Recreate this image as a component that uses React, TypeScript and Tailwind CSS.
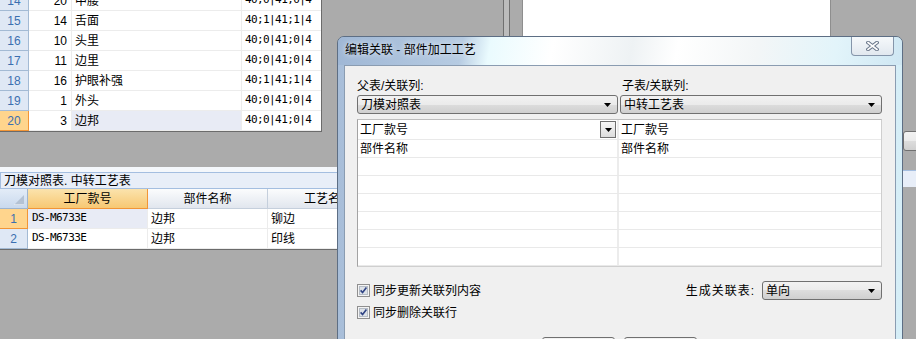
import React from "react";

const SANS = "font-['Liberation_Sans','Noto_Sans_CJK_SC',sans-serif]";
const MONO = "font-['DejaVu_Sans_Mono','Liberation_Mono',monospace]";

const TOP_ROWS = [
  { n: 14, q: 20, name: "中腰", code: "40;0|41;0|4" },
  { n: 15, q: 14, name: "舌面", code: "40;1|41;1|4" },
  { n: 16, q: 10, name: "头里", code: "40;0|41;0|4" },
  { n: 17, q: 11, name: "边里", code: "40;0|41;0|4" },
  { n: 18, q: 16, name: "护眼补强", code: "40;1|41;1|4" },
  { n: 19, q: 1, name: "外头", code: "40;0|41;0|4" },
  { n: 20, q: 3, name: "边邦", code: "40;0|41;0|4", active: true },
];

const BOTTOM_ROWS = [
  { n: 1, code: "DS-M6733E", part: "边邦", craft: "铆边", active: true },
  { n: 2, code: "DS-M6733E", part: "边邦", craft: "印线" },
];

const LINK_ROWS = [
  ["工厂款号", "工厂款号"],
  ["部件名称", "部件名称"],
  ["", ""],
  ["", ""],
  ["", ""],
  ["", ""],
  ["", ""],
  ["", ""],
];

function Arrow() {
  return (
    <svg width="7" height="4" viewBox="0 0 7 4">
      <path d="M0 0h7L3.5 4z" fill="#000" />
    </svg>
  );
}

function Combo({ value, className = "" }: { value: string; className?: string }) {
  return (
    <div
      className={`flex h-[19px] items-center justify-between rounded-[3px] border border-[#707070] bg-[linear-gradient(#f2f2f2,#ebebeb_50%,#dddddd_50%,#cfcfcf)] pl-[3px] pr-[6px] ${className}`}
    >
      <span className="text-[12px] leading-none">{value}</span>
      <Arrow />
    </div>
  );
}

function CheckBox() {
  return (
    <svg width="13" height="13" viewBox="0 0 13 13">
      <rect x="0.5" y="0.5" width="12" height="12" fill="#f4f4f4" stroke="#8f8f8f" />
      <rect x="2.5" y="2.5" width="8" height="8" fill="#dde2e8" stroke="#b5bcc5" />
      <path d="M3.6 6.4L5.6 8.6L9.4 3.6" fill="none" stroke="#2e4283" strokeWidth="1.6" />
    </svg>
  );
}

export default function App() {
  return (
    <div className={`relative h-[339px] w-[916px] overflow-hidden bg-[#ababab] text-black ${SANS}`}>
      {/* left side: the two grids behind the dialog */}
      <div className="flex flex-col">
        <div className="w-[322px] overflow-hidden border-r border-b border-[#6b6b6b] bg-white">
          <div className="-mt-[9px]">
            {TOP_ROWS.map((r) => (
              <div key={r.n} className="flex h-[20px] text-[12px]">
                <div
                  className={`flex w-[29px] items-center justify-center border-r border-b text-[#3b6fb0] ${
                    r.active ? "border-[#f29536] bg-[#ffd58d]" : "border-[#a3bad4] bg-[#dfe8f5]"
                  }`}
                >
                  {r.n}
                </div>
                <div className="flex w-[43px] items-center justify-end border-r border-b border-[#ececec] pr-[4px]">
                  {r.q}
                </div>
                <div
                  className={`flex w-[170px] items-center border-r border-b border-[#ececec] pl-[3px] ${
                    r.active ? "bg-[#e8ebf5]" : ""
                  }`}
                >
                  {r.name}
                </div>
                <div
                  className={`flex flex-1 items-center border-b border-[#ececec] pl-[3px] text-[11px] tracking-[-0.6px] ${MONO}`}
                >
                  {r.code}
                </div>
              </div>
            ))}
          </div>
        </div>

        <div className="mt-[35px] w-[400px] bg-[#f4f7fb] pt-[5px]">
          <div className="flex h-[17px] items-center border border-[#a4bee0] bg-[#e8eef8] pl-[3px] text-[12px]">
            刀模对照表. 中转工艺表
          </div>
          <div className="flex h-[20px] text-[12px]">
            <div className="relative w-[28px] border-r border-b border-[#9db4cf] bg-[linear-gradient(#e3ecf7,#c9d9ee)]">
              <svg className="absolute right-[3px] bottom-[3px]" width="10" height="10" viewBox="0 0 10 10">
                <path d="M10 0V10H0z" fill="#b4c2d4" />
                <path d="M0 10H10" stroke="#fff" strokeWidth="1" />
              </svg>
            </div>
            <div className="flex w-[120px] items-center justify-center border-r border-b border-[#f29536] bg-[linear-gradient(#fbe3ad,#f7c873)]">
              工厂款号
            </div>
            <div className="flex w-[120px] items-center justify-center border-r border-b border-[#c5cfdc] bg-[linear-gradient(#fbfcfd,#e1e6ee)]">
              部件名称
            </div>
            <div className="flex w-[120px] items-center justify-center border-b border-[#c5cfdc] bg-[linear-gradient(#fbfcfd,#e1e6ee)]">
              工艺名称
            </div>
          </div>
          <div className="border-b border-[#6b6b6b] bg-white">
            {BOTTOM_ROWS.map((r) => (
              <div key={r.n} className="flex h-[20px] text-[12px]">
                <div
                  className={`flex w-[28px] items-center justify-center border-r border-b text-[#3b6fb0] ${
                    r.active ? "border-[#f29536] bg-[#ffd58d]" : "border-[#a3bad4] bg-[#dfe8f5]"
                  }`}
                >
                  {r.n}
                </div>
                <div
                  className={`flex w-[120px] items-center border-r border-b border-[#ececec] pl-[4px] text-[11px] tracking-[-0.6px] font-medium ${MONO} ${
                    r.active ? "bg-[#e8ebf5]" : ""
                  }`}
                >
                  {r.code}
                </div>
                <div className="flex w-[120px] items-center border-r border-b border-[#ececec] pl-[3px]">{r.part}</div>
                <div className="flex w-[120px] items-center border-b border-[#ececec] pl-[3px]">{r.craft}</div>
              </div>
            ))}
          </div>
        </div>
      </div>

      {/* windows behind the dialog */}
      <div className="absolute top-0 left-[503px] h-[40px] w-[7px] border-x border-[#707070] bg-[#bcbcbc]" />
      <div className="absolute top-0 left-[522px] h-[40px] w-[309px] border-x border-[#8e8e8e] bg-white" />
      <div className="absolute top-0 left-[903px] flex h-full w-[13px] flex-col">
        <div className="mt-[131px] h-[20px] w-[30px] rounded-[3px] border border-[#707070] bg-[linear-gradient(#f2f2f2,#ebebeb_50%,#dddddd_50%,#cfcfcf)]" />
        <div className="mt-[19px] h-[17px] border-t border-[#a4bee0] bg-[#e8eef8]" />
      </div>

      {/* dialog */}
      <div className="absolute top-[36px] left-[337px] h-[320px] w-[566px] rounded-t-[7px] border border-[#5d6e84] bg-[linear-gradient(90deg,#a8bed9,#c6dcee_40%,#d6eef7)]">
        <div className="flex h-[28px] rounded-t-[6px] bg-[linear-gradient(100deg,#9fb7d5_0%,#b6cbe2_22%,#eafbfe_27%,#ffffff_38%,#eef2f4_52%,#ffffff_60%,#f3f6f7_74%,#e2f4fa_88%,#cfe7f3_100%)]">
          <span className="mt-[6px] ml-[7px] text-[12px] leading-[14px] [text-shadow:0_0_6px_#fff]">
            编辑关联 - 部件加工工艺
          </span>
          <div className="mr-[8px] ml-auto flex h-[19px] w-[43px] items-center justify-center rounded-b-[4px] border border-t-0 border-[#8595aa] bg-[linear-gradient(#f6f9fb,#e1e8ef)]">
            <svg width="13" height="10" viewBox="0 0 13 10">
              <path d="M2 1.5L11 8.5M11 1.5L2 8.5" stroke="#69768a" strokeWidth="3.6" strokeLinecap="square" />
              <path d="M2 1.5L11 8.5M11 1.5L2 8.5" stroke="#fdfdfd" strokeWidth="1.6" strokeLinecap="square" />
            </svg>
          </div>
        </div>

        <div className="mx-[6px] h-[300px] border border-[#8a9cb1] bg-[#f0f0f0] pt-[13px] pr-[13px] pl-[12px] text-[12px]">
          <div className="flex gap-[4px] leading-[15px]">
            <span className="w-[261px]">父表/关联列:</span>
            <span>子表/关联列:</span>
          </div>
          <div className="mt-[1px] flex gap-[2px]">
            <Combo value="刀模对照表" className="w-[261px]" />
            <Combo value="中转工艺表" className="w-[262px]" />
          </div>

          <div className="mt-[5px] w-[525px] border border-[#cfcfcf] border-l-[#a3a3a3] border-t-[#bdbdbd] bg-white">
            {LINK_ROWS.map(([a, b], i) => (
              <div key={i} className={`flex border-b border-[#e9e9e9] ${i === 0 ? "h-[20px]" : "h-[18px]"}`}>
                <div className="relative flex w-[261px] items-center border-r-2 border-[#ececec] pl-[2px]">
                  {a}
                  {i === 0 && (
                    <div className="absolute top-[1px] right-[1px] flex h-[17px] w-[16px] items-center justify-center border border-[#6f6f6f] bg-[linear-gradient(#f6f6f6,#dcdcdc)]">
                      <Arrow />
                    </div>
                  )}
                </div>
                <div className="flex flex-1 items-center pl-[2px]">{b}</div>
              </div>
            ))}
          </div>

          <div className="mt-[14px] flex h-[19px] items-center justify-between">
            <div className="flex items-center gap-[3px]">
              <CheckBox />
              <span>同步更新关联列内容</span>
            </div>
            <div className="flex items-center gap-[7px]">
              <span className="tracking-[1px]">生成关联表:</span>
              <Combo value="单向" className="w-[120px]" />
            </div>
          </div>
          <div className="mt-[3px] flex h-[19px] items-center gap-[3px]">
            <CheckBox />
            <span>同步删除关联行</span>
          </div>

          <div className="mt-[15px] flex justify-center gap-[9px]">
            <div className="h-[23px] w-[73px] rounded-[3px] border border-[#707070] bg-[linear-gradient(#f2f2f2,#ebebeb_50%,#dddddd_50%,#cfcfcf)]" />
            <div className="h-[23px] w-[73px] rounded-[3px] border border-[#707070] bg-[linear-gradient(#f2f2f2,#ebebeb_50%,#dddddd_50%,#cfcfcf)]" />
          </div>
        </div>
      </div>
    </div>
  );
}
